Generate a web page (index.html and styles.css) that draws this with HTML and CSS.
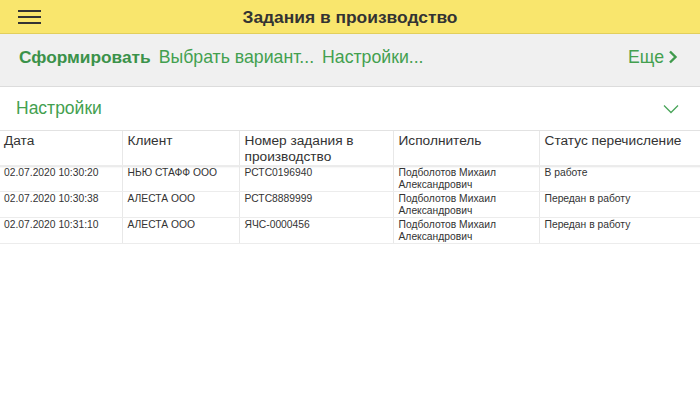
FILE: index.html
```html
<!DOCTYPE html>
<html lang="ru">
<head>
  <meta charset="UTF-8">
  <title>Задания в производство</title>
  <link rel="stylesheet" href="styles.css">
</head>
<body>
  <!-- верхняя панель -->
  <div class="header">
    <div class="burger"><span></span><span></span><span></span></div>
    <div class="title">Задания в производство</div>
  </div>

  <!-- командная панель -->
  <div class="toolbar">
    <a class="cmd main">Сформировать</a>
    <a class="cmd">Выбрать вариант...</a>
    <a class="cmd">Настройки...</a>
    <a class="cmd more">Еще
      <svg width="10" height="14" viewBox="0 0 10 14"><path d="M2 1.5 L7.5 7 L2 12.5" fill="none" stroke="#3f9a4c" stroke-width="2.4"/></svg>
    </a>
  </div>

  <!-- настройки -->
  <div class="settings">
    <span>Настройки</span>
    <svg width="16" height="10" viewBox="0 0 16 10"><path d="M1 1.5 L8 8.5 L15 1.5" fill="none" stroke="#4aa55a" stroke-width="1.3"/></svg>
  </div>

  <!-- таблица -->
  <table class="report">
    <colgroup>
      <col style="width:122px">
      <col style="width:117px">
      <col style="width:154px">
      <col style="width:146px">
      <col>
    </colgroup>
    <thead>
      <tr>
        <th>Дата</th>
        <th>Клиент</th>
        <th>Номер задания в производство</th>
        <th>Исполнитель</th>
        <th>Статус перечисление</th>
      </tr>
    </thead>
    <tbody>
      <tr>
        <td>02.07.2020 10:30:20</td>
        <td>НЬЮ СТАФФ ООО</td>
        <td>РСТС0196940</td>
        <td>Подболотов Михаил Александрович</td>
        <td>В работе</td>
      </tr>
      <tr>
        <td>02.07.2020 10:30:38</td>
        <td>АЛЕСТА ООО</td>
        <td>РСТС8889999</td>
        <td>Подболотов Михаил Александрович</td>
        <td>Передан в работу</td>
      </tr>
      <tr>
        <td>02.07.2020 10:31:10</td>
        <td>АЛЕСТА ООО</td>
        <td>ЯЧС-0000456</td>
        <td>Подболотов Михаил Александрович</td>
        <td>Передан в работу</td>
      </tr>
    </tbody>
  </table>
</body>
</html>
```

FILE: styles.css
```css
/* общие настройки */
* {
  margin: 0;
  padding: 0;
  box-sizing: border-box;
}

body {
  font-family: "Liberation Sans", Arial, sans-serif;
  background: #fff;
  color: #333;
  width: 700px;
}

/* верхняя панель */
.header {
  height: 34px;
  background: #f9e66d;
  border-bottom: 1px solid #e2cf5c;
  display: flex;
  align-items: center;
  position: relative;
}

.burger {
  width: 23px;
  margin-left: 18px;
  display: flex;
  flex-direction: column;
  gap: 4px;
}

.burger span {
  display: block;
  height: 2px;
  background: #333;
}

.title {
  position: absolute;
  left: 0;
  right: 0;
  top: 7px;
  text-align: center;
  font-size: 17.4px;
  font-weight: bold;
  color: #333;
  pointer-events: none;
}

/* командная панель */
.toolbar {
  height: 53px;
  background: #f0f0f0;
  border-bottom: 1px solid #dcdcdc;
  display: flex;
  align-items: center;
  padding: 0 22px 6px 19px;
  gap: 8px;
}

.cmd {
  font-size: 17.7px;
  color: #43a04f;
  cursor: pointer;
}

.cmd.main {
  font-weight: bold;
  color: #3b924a;
  font-size: 17.3px;
}

.cmd.more {
  margin-left: auto;
  display: flex;
  align-items: center;
  gap: 4px;
}

/* блок настроек */
.settings {
  height: 44px;
  display: flex;
  align-items: center;
  justify-content: space-between;
  padding: 0 21px 0 16px;
  border-bottom: 1px solid #e2e2e2;
  font-size: 17.5px;
  color: #43a04f;
}

/* таблица отчета */
.report {
  width: 700px;
  border-collapse: collapse;
  table-layout: fixed;
}

.report th {
  height: 34px;
  padding: 2px 5px 0 5px;
  font-size: 13.7px;
  font-weight: normal;
  line-height: 16px;
  text-align: left;
  vertical-align: top;
  color: #333;
  border-left: 1px solid #e8e8e8;
  border-bottom: 1px solid #ececec;
}

.report td {
  height: 25px;
  padding: 1px 5px 0 5px;
  font-size: 10.3px;
  line-height: 12px;
  vertical-align: top;
  color: #333;
  border-left: 1px solid #e8e8e8;
  border-bottom: 1px solid #ececec;
}

.report th:first-child,
.report td:first-child {
  border-left: none;
  padding-left: 4px;
}

.report tbody tr:first-child td {
  box-shadow: inset 0 3px 2px -2px #e4e4e4;
}
```
